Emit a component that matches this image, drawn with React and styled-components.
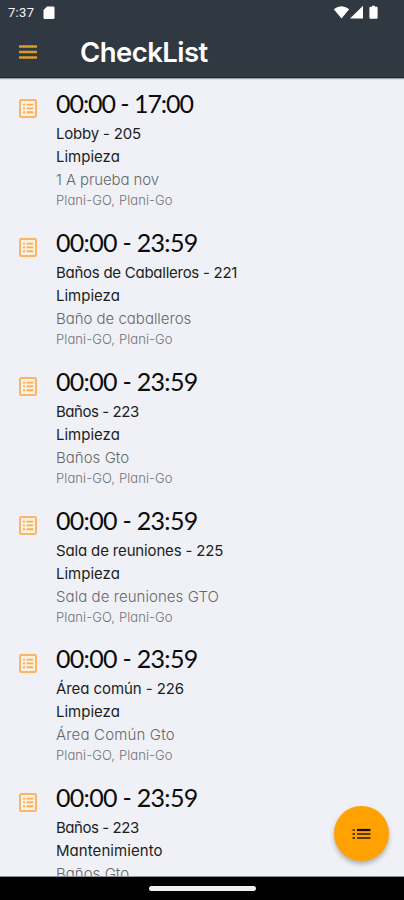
import React from "react";
import styled, { createGlobalStyle } from "styled-components";

const Global = createGlobalStyle`
  * { box-sizing: border-box; }
  body { margin: 0; background: #f0f1f6; }
`;

const Screen = styled.div`
  width: 404px;
  height: 900px;
  display: flex;
  flex-direction: column;
  position: relative;
  overflow: hidden;
  background: #f0f1f6;
  font-family: Inter, "Noto Sans", sans-serif;
  font-feature-settings: "cv11" 1;
`;

const Header = styled.header`
  flex: none;
  height: 78px;
  background: #303841;
  border-bottom: 1px solid #22282f;
  box-shadow: 0 1px 1px #9a9da2;
  color: #fff;
`;

const StatusBar = styled.div`
  display: flex;
  align-items: center;
  height: 25px;
  padding: 0 25px 0 8px;
`;

const Clock = styled.span`
  width: 35px;
  font: 400 13px/25px Roboto, sans-serif;
  letter-spacing: 0.3px;
  color: #f4f5f6;
`;

const Indicators = styled.div`
  margin-left: auto;
  display: flex;
`;

const TitleBar = styled.div`
  display: flex;
  align-items: center;
  height: 53px;
  padding-left: 19px;
`;

const MenuButton = styled.button`
  display: flex;
  width: 61px;
  padding: 0;
  border: 0;
  background: none;
`;

const Title = styled.h1`
  margin: 0;
  font-size: 27.5px;
  line-height: 50px;
  font-weight: 600;
  letter-spacing: -0.55px;
`;

const List = styled.main`
  flex: 1;
  min-height: 0;
  overflow: hidden;
  padding-top: 12px;
`;

const Item = styled.article`
  display: flex;
  height: 138.85px;
  padding-left: 19px;
`;

const ItemIcon = styled.div`
  width: 37px;
  padding-top: 9px;
`;

const Line = styled.div`
  white-space: nowrap;
  letter-spacing: ${(p) => p.$tracking}px;
`;

const Time = styled(Line)`
  font: 400 25px/27px Lato, sans-serif;
  height: 32px;
  color: #0c0c0d;
`;

const Label = styled(Line)`
  font-size: 15px;
  line-height: 23px;
  color: #201e1e;
`;

const Note = styled(Label)`
  font-weight: 300;
  color: #66676b;
`;

const People = styled(Line)`
  font-size: 13px;
  line-height: 19px;
  font-weight: 300;
  color: #707175;
`;

const Fab = styled.button`
  position: absolute;
  left: 334px;
  top: 806px;
  width: 55px;
  height: 55px;
  display: flex;
  align-items: center;
  justify-content: center;
  padding: 0;
  border: 0;
  border-radius: 50%;
  background: #ffa100;
  box-shadow: 0 3px 5px rgba(0, 0, 0, 0.28);
`;

const NavBar = styled.footer`
  flex: none;
  display: flex;
  justify-content: center;
  align-items: center;
  height: 23px;
  background: #000;
  box-shadow: 0 -1px 0 #8e8f93;
`;

const HomeHandle = styled.div`
  width: 107px;
  height: 5px;
  border-radius: 3px;
  background: #f0f0f0;
`;

const SdCardIcon = () => (
  <svg width="12" height="14" viewBox="0 0 12 14">
    <path d="M4 0.5h6.2q1.3 0 1.3 1.3v10q0 1.3-1.3 1.3H1.8Q0.5 13.1 0.5 11.8V4z" fill="#fff" />
  </svg>
);

const SignalIcons = () => (
  <svg width="46" height="15" viewBox="0 0 46 15">
    <path d="M0.8 4.2Q8.5-1.6 16.2 4.2L8.5 13.6z" fill="#fff" />
    <path d="M30 0.8V13.6H17z" fill="#fff" />
    <path d="M39 0.8h3v1h1.6q1 0 1 1V12.6q0 1.2-1.2 1.2h-5.8q-1.2 0-1.2-1.2V2.8q0-1 1-1H39z" fill="#fff" />
  </svg>
);

const MenuIcon = () => (
  <svg width="18" height="14" viewBox="0 0 18 14">
    <path d="M0 1.5h18M0 7h18M0 12.5h18" stroke="#dc9a2c" strokeWidth="2.4" />
  </svg>
);

const ListBoxIcon = () => (
  <svg width="18" height="19" viewBox="0 0 18 19">
    <rect x="1" y="1" width="16" height="17" rx="1.2" fill="#fff1df" stroke="#fab568" strokeWidth="2" />
    <path d="M4 5.6h2M4 9.4h2M4 13.2h2M7.6 5.6h6.6M7.6 9.4h6.6M7.6 13.2h6.6" stroke="#f8ae56" strokeWidth="1.9" />
  </svg>
);

const FabListIcon = () => (
  <svg width="19" height="12" viewBox="0 0 19 12">
    <path d="M0.5 2h2.5" stroke="#6b4700" strokeWidth="2" />
    <path d="M5 2h13.5" stroke="#171000" strokeWidth="2.2" />
    <path d="M0.5 6h2.5M5 6h13.5M0.5 10h2.5M5 10h13.5" stroke="#5a3c00" strokeWidth="2" />
  </svg>
);

const items = [
  { time: "00:00 - 17:00", place: "Lobby - 205", task: "Limpieza", note: "1 A prueba nov", tracking: [-1.05, -0.2, 0, -0.1] },
  { time: "00:00 - 23:59", place: "Baños de Caballeros - 221", task: "Limpieza", note: "Baño de caballeros", tracking: [-0.7, -0.26, 0, -0.02] },
  { time: "00:00 - 23:59", place: "Baños - 223", task: "Limpieza", note: "Baños Gto", tracking: [-0.7, -0.45, 0, 0.03] },
  { time: "00:00 - 23:59", place: "Sala de reuniones - 225", task: "Limpieza", note: "Sala de reuniones GTO", tracking: [-0.7, -0.15, 0, 0.06] },
  { time: "00:00 - 23:59", place: "Área común - 226", task: "Limpieza", note: "Área Común Gto", tracking: [-0.7, -0.08, 0, 0.17] },
  { time: "00:00 - 23:59", place: "Baños - 223", task: "Mantenimiento", note: "Baños Gto", tracking: [-0.7, -0.45, 0.06, 0.03] },
];

export default function App() {
  return (
    <Screen>
      <Global />
      <Header>
        <StatusBar>
          <Clock>7:37</Clock>
          <SdCardIcon />
          <Indicators><SignalIcons /></Indicators>
        </StatusBar>
        <TitleBar>
          <MenuButton aria-label="Menú"><MenuIcon /></MenuButton>
          <Title>CheckList</Title>
        </TitleBar>
      </Header>
      <List>
        {items.map((item, i) => (
          <Item key={i}>
            <ItemIcon><ListBoxIcon /></ItemIcon>
            <div>
              <Time $tracking={item.tracking[0]}>{item.time}</Time>
              <Label $tracking={item.tracking[1]}>{item.place}</Label>
              <Label $tracking={item.tracking[2]}>{item.task}</Label>
              <Note $tracking={item.tracking[3]}>{item.note}</Note>
              <People $tracking={0.1}>Plani-GO, Plani-Go</People>
            </div>
          </Item>
        ))}
      </List>
      <Fab aria-label="Lista"><FabListIcon /></Fab>
      <NavBar><HomeHandle /></NavBar>
    </Screen>
  );
}
